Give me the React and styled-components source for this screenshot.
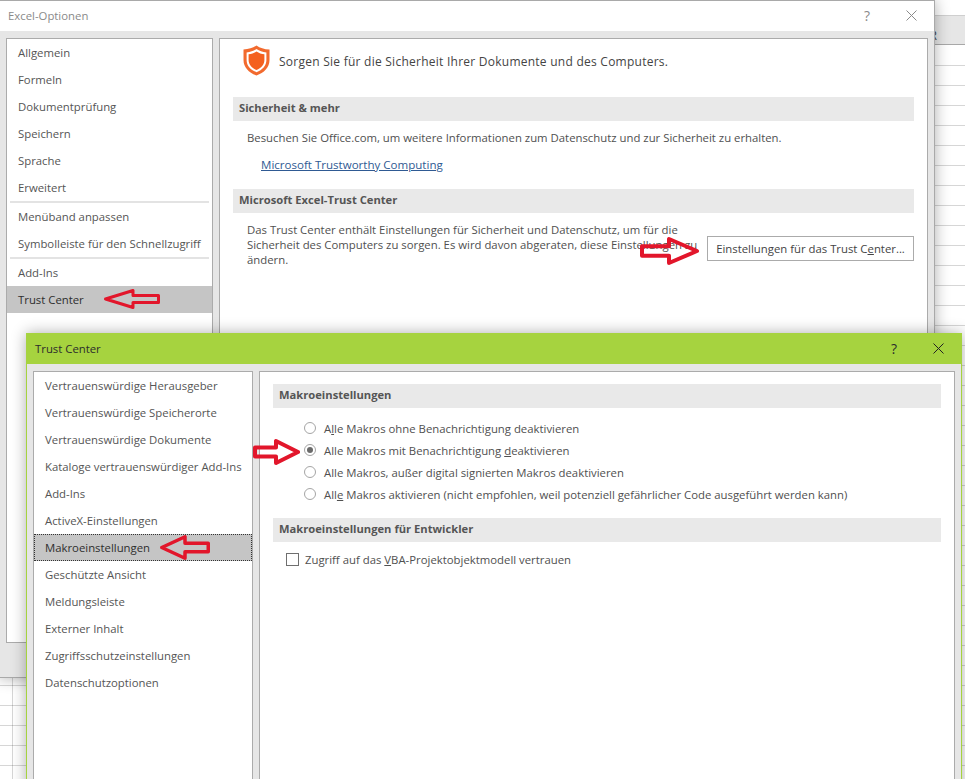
import React from "react";
import styled, { createGlobalStyle } from "styled-components";

const Global = createGlobalStyle`
  html, body { margin: 0; padding: 0; background: #fff; }
  body { font-family: "Open Sans", "Noto Sans", sans-serif; font-size: 11.35px; color: #505050; }
  u { text-underline-offset: 1px; text-decoration-thickness: 1px; }
`;

const Stage = styled.div`
  position: relative;
  width: 965px;
  height: 779px;
  overflow: hidden;
  background: #fff;
`;

const Sheet = styled.div`
  display: flex;
  flex-direction: column;
  height: 100%;
  padding-top: 15px;
  box-sizing: border-box;
`;

const SheetHeader = styled.div`
  height: 30px;
  flex: none;
  box-sizing: border-box;
  background: #e6e6e6;
  border-top: 1px solid #cfcfcf;
  border-bottom: 1px solid #a8a8a8;
  display: flex;
  justify-content: flex-end;
  align-items: center;
  padding: 10px 28px 0 0;
  font-size: 12px;
  color: #444;
`;

const SheetGrid = styled.div`
  flex: 1;
  background-color: #fff;
  background-image:
    repeating-linear-gradient(to bottom, #fff 0 19px, #d6d6d6 19px 20px),
    linear-gradient(#d6d6d6, #d6d6d6);
  background-size: 100% 100%, 1px 100%;
  background-position: 0 1px, 12px 0;
  background-repeat: no-repeat;
  background-blend-mode: multiply;
`;

const Win = styled.section`
  position: absolute;
  left: ${(p) => p.$left}px;
  top: ${(p) => p.$top}px;
  width: ${(p) => p.$width}px;
  height: ${(p) => p.$height}px;
  box-sizing: border-box;
  display: flex;
  flex-direction: column;
  background: #e6e6e6;
  border: 1px solid ${(p) => p.$edge};
  box-shadow: 0 0 14px rgba(0, 0, 0, 0.32);
`;

const TitleBar = styled.header`
  height: 30px;
  flex: none;
  box-sizing: border-box;
  display: flex;
  align-items: center;
  background: ${(p) => p.$bg};
  color: ${(p) => p.$fg};
  padding: 0 ${(p) => p.$padRight}px 2px ${(p) => p.$padLeft}px;
`;

const TitleText = styled.h1`
  flex: 1;
  margin: 0;
  font: inherit;
`;

const TitleHelp = styled.span`
  width: 16px;
  text-align: center;
  font-size: 14px;
  margin-right: 31px;
`;

const Body = styled.div`
  flex: 1;
  min-height: 0;
  display: flex;
  gap: 6px;
  padding: 7px 6px ${(p) => p.$padBottom}px 6px;
`;

const SideList = styled.nav`
  width: ${(p) => p.$width}px;
  flex: none;
  box-sizing: border-box;
  background: #fff;
  border: 1px solid #ababab;
  display: flex;
  flex-direction: column;
`;

const SideItem = styled.div`
  height: 27px;
  flex: none;
  box-sizing: border-box;
  display: flex;
  align-items: center;
  padding-left: 11px;
  color: ${(p) => (p.$active ? "#2e2e2e" : "#555")};
  background: ${(p) => (p.$active ? "#c5c5c5" : "transparent")};
  outline: ${(p) => (p.$focus ? "1px dotted #333" : "none")};
  outline-offset: -1px;
  white-space: nowrap;
`;

const SideRule = styled.hr`
  flex: none;
  width: calc(100% - 6px);
  height: 2px;
  margin: 0 3px;
  border: 0;
  background: #e3e3e3;
`;

const Content = styled.main`
  flex: 1;
  min-width: 0;
  box-sizing: border-box;
  background: #fff;
  border: 1px solid #ababab;
  display: flex;
  flex-direction: column;
  padding: ${(p) => p.$padTop}px 13px 0 13px;
`;

const Banner = styled.div`
  height: 30px;
  margin: 0 0 22px 10px;
  display: flex;
  align-items: center;
  gap: 9px;
  font-size: 12px;
  letter-spacing: 0.25px;
  color: #444;
`;

const BannerText = styled.span`
  padding-top: 2px;
`;

const SectionBar = styled.h2`
  height: 24px;
  flex: none;
  box-sizing: border-box;
  margin: 0;
  display: flex;
  align-items: center;
  padding: 0 0 3px 6px;
  background: #e9e9e9;
  font-size: 11.2px;
  font-weight: 700;
  color: #555;
`;

const Para = styled.p`
  margin: 9px 0 0 14px;
  line-height: 15px;
  color: #505050;
`;

const LinkText = styled.a`
  margin: 12px 0 16px 28px;
  font-size: 11.55px;
  line-height: 16px;
  color: #2f5a93;
  text-decoration: underline;
`;

const TrustRow = styled.div`
  display: flex;
  align-items: flex-start;
  justify-content: space-between;
  padding-left: 14px;
  margin-top: 9px;
`;

const TrustText = styled.p`
  width: 456px;
  margin: 0;
  line-height: 15px;
  color: #505050;
`;

const Btn = styled.button`
  width: 207px;
  height: 25px;
  margin-top: 14px;
  box-sizing: border-box;
  background: #fff;
  border: 1px solid #ababab;
  font: inherit;
  color: #444;
  padding: 0;
`;

const Options = styled.div`
  display: flex;
  flex-direction: column;
  padding: 9px 0 13px 31px;
`;

const Option = styled.label`
  height: 22px;
  display: flex;
  align-items: center;
  gap: 8px;
  color: #505050;
  white-space: nowrap;
`;

const Radio = styled.span`
  width: 12px;
  height: 12px;
  flex: none;
  box-sizing: border-box;
  border: 1px solid #a5a5a5;
  border-radius: 50%;
  background: #fff;
  display: flex;
  align-items: center;
  justify-content: center;
  &::after {
    content: "";
    width: 6px;
    height: 6px;
    border-radius: 50%;
    background: ${(p) => (p.$on ? "#6a6a6a" : "transparent")};
  }
`;

const CheckRow = styled.label`
  display: flex;
  align-items: center;
  gap: 6px;
  height: 20px;
  margin: 7px 0 0 13px;
  color: #505050;
`;

const Check = styled.span`
  width: 13px;
  height: 13px;
  box-sizing: border-box;
  border: 1px solid #6f6f6f;
  background: #fff;
`;

const ArrowBox = styled.svg`
  position: absolute;
  left: ${(p) => p.$x}px;
  top: ${(p) => p.$y}px;
  z-index: 5;
  overflow: visible;
`;

const Arrow = ({ x, y, w, h, left, stroke }) => {
  const neck = Math.round(w * 0.49);
  const top = h * 0.33;
  const bot = h * 0.67;
  const inset = stroke / 2;
  const pts = left
    ? `${inset},${h / 2} ${w - neck},${inset} ${w - neck},${top} ${w - inset},${top} ${w - inset},${bot} ${w - neck},${bot} ${w - neck},${h - inset}`
    : `${w - inset},${h / 2} ${neck},${inset} ${neck},${top} ${inset},${top} ${inset},${bot} ${neck},${bot} ${neck},${h - inset}`;
  return (
    <ArrowBox $x={x} $y={y} width={w} height={h} viewBox={`0 0 ${w} ${h}`}>
      <polygon points={pts} fill="none" stroke="#e2162b" strokeWidth={stroke} strokeLinejoin="round" />
    </ArrowBox>
  );
};

const Shield = () => (
  <svg width="27" height="31" viewBox="0 0 27 31" style={{ flex: "none" }}>
    <path d="M13.5 0.5 C17 3 21 4.2 26.5 4.6 V15 C26.5 22.5 21 27.8 13.5 30.5 C6 27.8 0.5 22.5 0.5 15 V4.6 C6 4.2 10 3 13.5 0.5 Z" fill="#f26a2e" />
    <path d="M13.5 4 C16.4 6 19.4 7 23.4 7.4 V15 C23.4 20.8 19.4 24.9 13.5 27.2 C7.6 24.9 3.6 20.8 3.6 15 V7.4 C7.6 7 10.6 6 13.5 4 Z" fill="#fff" />
    <path d="M13.5 6.5 C16 8.2 18.4 9 21.4 9.3 V15 C21.4 19.6 18.2 23 13.5 25 C8.8 23 5.6 19.6 5.6 15 V9.3 C8.6 9 11 8.2 13.5 6.5 Z" fill="#f4601f" />
  </svg>
);

const CloseIcon = ({ color }) => (
  <svg width="11" height="11" viewBox="0 0 11 11">
    <path d="M0.5 0.5 L10.5 10.5 M10.5 0.5 L0.5 10.5" stroke={color} strokeWidth="1" />
  </svg>
);

const excelGroups = [
  ["Allgemein", "Formeln", "Dokumentprüfung", "Speichern", "Sprache", "Erweitert"],
  ["Menüband anpassen", "Symbolleiste für den Schnellzugriff"],
  ["Add-Ins", "Trust Center"],
];

const trustItems = [
  "Vertrauenswürdige Herausgeber",
  "Vertrauenswürdige Speicherorte",
  "Vertrauenswürdige Dokumente",
  "Kataloge vertrauenswürdiger Add-Ins",
  "Add-Ins",
  "ActiveX-Einstellungen",
  "Makroeinstellungen",
  "Geschützte Ansicht",
  "Meldungsleiste",
  "Externer Inhalt",
  "Zugriffsschutzeinstellungen",
  "Datenschutzoptionen",
];

export default function App() {
  return (
    <Stage>
      <Global />
      <Sheet>
        <SheetHeader>R</SheetHeader>
        <SheetGrid />
      </Sheet>

      <Win $left={-1} $top={0} $width={936} $height={678} $edge="#a9a9a9">
        <TitleBar $bg="#fff" $fg="#8a8a8a" $padLeft={8} $padRight={17}>
          <TitleText>Excel-Optionen</TitleText>
          <TitleHelp>?</TitleHelp>
          <CloseIcon color="#8a8a8a" />
        </TitleBar>
        <Body $padBottom={34}>
          <SideList $width={207}>
            {excelGroups.map((g, i) => (
              <React.Fragment key={i}>
                {i > 0 && <SideRule />}
                {g.map((t) => (
                  <SideItem key={t} $active={t === "Trust Center"}>{t}</SideItem>
                ))}
              </React.Fragment>
            ))}
          </SideList>
          <Content $padTop={6}>
            <Banner>
              <Shield />
              <BannerText>Sorgen Sie für die Sicherheit Ihrer Dokumente und des Computers.</BannerText>
            </Banner>
            <SectionBar>Sicherheit &amp; mehr</SectionBar>
            <Para>Besuchen Sie Office.com, um weitere Informationen zum Datenschutz und zur Sicherheit zu erhalten.</Para>
            <LinkText>Microsoft Trustworthy Computing</LinkText>
            <SectionBar>Microsoft Excel-Trust Center</SectionBar>
            <TrustRow>
              <TrustText>Das Trust Center enthält Einstellungen für Sicherheit und Datenschutz, um für die Sicherheit des Computers zu sorgen. Es wird davon abgeraten, diese Einstellungen zu ändern.</TrustText>
              <Btn>Einstellungen für das Trust C<u>e</u>nter...</Btn>
            </TrustRow>
          </Content>
        </Body>
      </Win>

      <Win $left={26} $top={333} $width={936} $height={470} $edge="#a6d33f">
        <TitleBar $bg="#a6d33f" $fg="#2c2c2c" $padLeft={8} $padRight={17}>
          <TitleText>Trust Center</TitleText>
          <TitleHelp>?</TitleHelp>
          <CloseIcon color="#222" />
        </TitleBar>
        <Body $padBottom={6}>
          <SideList $width={220}>
            {trustItems.map((t) => (
              <SideItem key={t} $active={t === "Makroeinstellungen"} $focus={t === "Makroeinstellungen"}>{t}</SideItem>
            ))}
          </SideList>
          <Content $padTop={12}>
            <SectionBar>Makroeinstellungen</SectionBar>
            <Options>
              <Option><Radio /><span>A<u>l</u>le Makros ohne Benachrichtigung deaktivieren</span></Option>
              <Option><Radio $on /><span>Alle Makros mit Benachrichtigung <u>d</u>eaktivieren</span></Option>
              <Option><Radio /><span>Alle Makros, außer di<u>g</u>ital signierten Makros deaktivieren</span></Option>
              <Option><Radio /><span>All<u>e</u> Makros aktivieren (nicht empfohlen, weil potenziell gefährlicher Code ausgeführt werden kann)</span></Option>
            </Options>
            <SectionBar>Makroeinstellungen für Entwickler</SectionBar>
            <CheckRow><Check /><span>Zugriff auf das <u>V</u>BA-Projektobjektmodell vertrauen</span></CheckRow>
          </Content>
        </Body>
      </Win>

      <Arrow x={104} y={289} w={56} h={20} stroke={3} left />
      <Arrow x={640} y={237} w={59} h={28} stroke={4} />
      <Arrow x={253} y={439} w={47} h={26} stroke={4} />
      <Arrow x={160} y={535} w={50} h={25} stroke={3.5} left />
    </Stage>
  );
}
